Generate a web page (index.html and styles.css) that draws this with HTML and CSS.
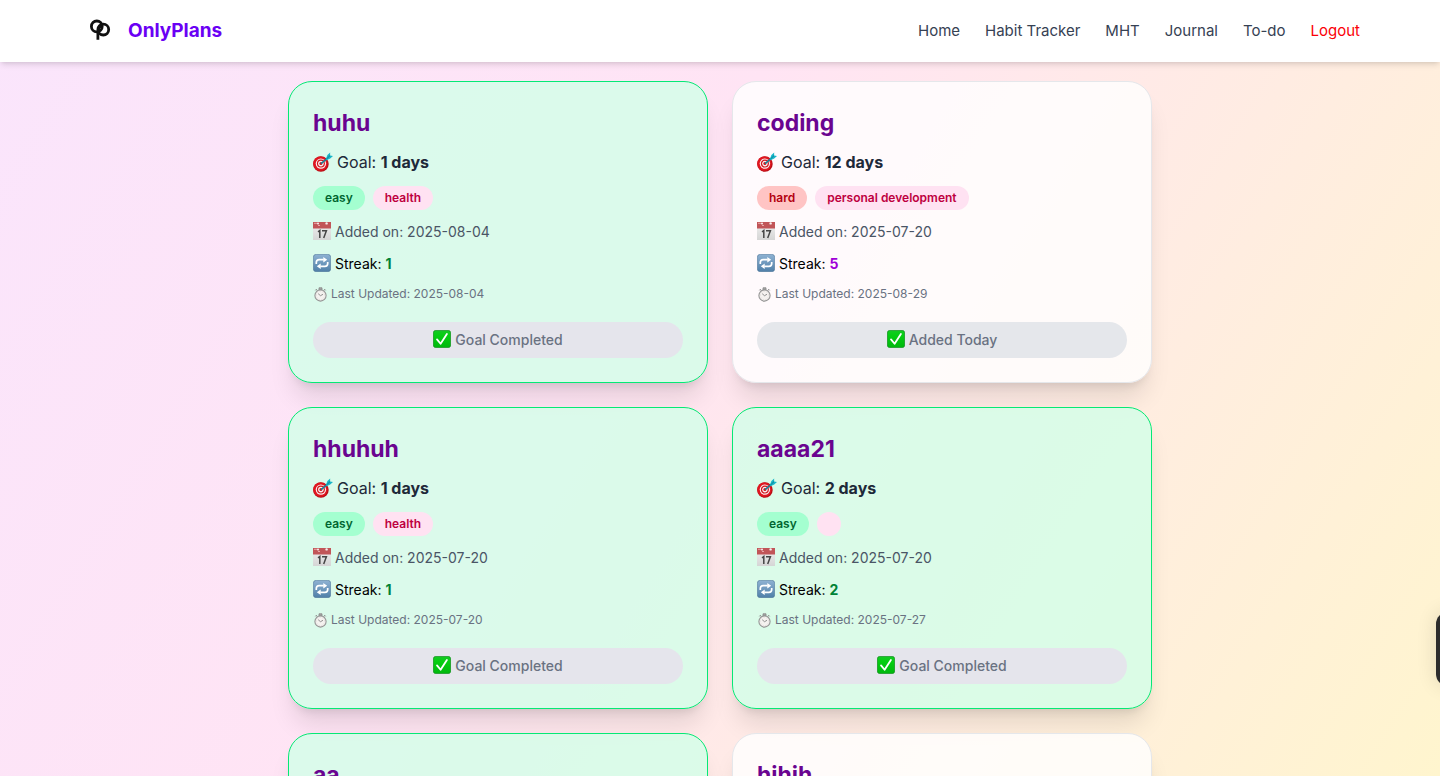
FILE: index.html
```html
<!DOCTYPE html>
<html lang="en">
<head>
<meta charset="utf-8">
<meta name="viewport" content="width=device-width, initial-scale=1">
<title>OnlyPlans</title>
<link rel="stylesheet" href="styles.css">
</head>
<body>
<svg class="sprite" aria-hidden="true">
  <defs>
    <linearGradient id="blue" x1="0" y1="0" x2="0" y2="1"><stop offset="0" stop-color="#8fb2d3"/><stop offset="1" stop-color="#4f7fa8"/></linearGradient>
    <linearGradient id="green" x1="0" y1="0" x2="0" y2="1"><stop offset="0" stop-color="#14c924"/><stop offset=".3" stop-color="#05ce12"/><stop offset="1" stop-color="#00b80d"/></linearGradient>
    <linearGradient id="paper" x1="0" y1="0" x2="0" y2="1"><stop offset="0" stop-color="#efefef"/><stop offset="1" stop-color="#d5d5d5"/></linearGradient>
  </defs>
  <symbol id="target" viewBox="0 0 20 20">
    <circle cx="7.9" cy="12" r="7.8" fill="#b90d15"/>
    <circle cx="7.4" cy="11.6" r="7.2" fill="#e01620"/>
    <circle cx="7.9" cy="11.6" r="5.2" fill="#f8eeee"/>
    <circle cx="7.9" cy="11.6" r="4" fill="#d3131c"/>
    <circle cx="7.9" cy="11.6" r="2.8" fill="#f8eeee"/>
    <circle cx="7.9" cy="11.6" r="1.5" fill="#d3131c"/>
    <path d="M8 11.6 15.5 5.4" stroke="#157f96" stroke-width="1.5"/>
    <path d="M12.8 7.2 14.4 3 17.2.6 17 3.6l3 .3-2.8 2.7-3.7 1.6z" fill="#19b6c9"/>
    <path d="M13.5 7 17.2 3.4" stroke="#0b7489" stroke-width=".8"/>
  </symbol>
  <symbol id="calendar" viewBox="0 0 18 18">
    <path d="M0 1h18v17H0z" fill="url(#paper)"/>
    <path d="M0 0h18v6.5H0z" fill="#c15558"/>
    <path d="M1 1.3h3M5 3.5h2" stroke="#e8a4a4"/>
    <circle cx="5" cy="1.4" r="1" fill="#f8eeee"/><circle cx="13.6" cy="1.4" r="1.2" fill="#f8eeee"/>
    <path d="M5 9.8 6.8 8.5V16M9 8.8h4.4L10.7 16" fill="none" stroke="#454545" stroke-width="1.5"/>
  </symbol>
  <symbol id="repeat" viewBox="0 0 18 18">
    <rect x=".3" y=".3" width="17.4" height="17.4" rx="3" fill="url(#blue)" stroke="#53789a" stroke-width=".6"/>
    <path d="M3.3 10V8.5q0-2.8 2.8-2.8h4.6M14.7 8v1.5q0 2.8-2.8 2.8H7.3" fill="none" stroke="#fff" stroke-width="1.7"/>
    <path d="M10.3 3.1 14.2 5.7l-3.9 2.7zM7.7 9.6 3.8 12.3 7.7 15z" fill="#fff"/>
  </symbol>
  <symbol id="watch" viewBox="0 0 15 15">
    <path d="M6 .8h3v2H6zM2.3 3.3l1-1 1.2 1.2M12.7 3.3l-1-1-1.2 1.2" fill="#aaa" stroke="#858585" stroke-width=".8"/>
    <circle cx="7.5" cy="8.5" r="5.6" fill="#f5f2f0" stroke="#959595" stroke-width="1.1"/>
    <circle cx="7.5" cy="8.5" r="4.1" fill="none" stroke="#d0cac7" stroke-width=".6" stroke-dasharray=".7 1"/>
    <path d="m7.5 8.7-2.3-2M7.5 8.7l2.5-1.4" stroke="#777" stroke-width=".8"/>
  </symbol>
  <symbol id="check" viewBox="0 0 18 18">
    <rect x=".4" y=".4" width="17.2" height="17.2" rx="2.4" fill="url(#green)" stroke="#159421" stroke-width=".8"/>
    <path d="m4 9.4 3.6 4.4L13.9 3.9" fill="none" stroke="#fff" stroke-width="1.8" stroke-linecap="round" stroke-linejoin="round"/>
  </symbol>
</svg>

<div class="app">
  <header class="navbar">
    <a class="brand" href="#">
      <svg class="brand-logo" viewBox="0 0 22 22" aria-hidden="true"><g fill="none" stroke="#111" stroke-width="2.8"><circle cx="7.8" cy="7.4" r="5.4"/><circle cx="14.3" cy="10.6" r="5.4"/><path d="M8.9 20.8v-8Q9 9.5 12 6.5"/></g></svg>
      <span>OnlyPlans</span>
    </a>
    <nav class="nav-links">
      <a href="#">Home</a><a href="#">Habit Tracker</a><a href="#">MHT</a><a href="#">Journal</a><a href="#">To-do</a><a class="logout" href="#">Logout</a>
    </nav>
  </header>

  <main class="habits">
    <article class="card done">
      <h2>huhu</h2>
      <p class="goal"><svg><use href="#target"/></svg><span>Goal: <strong>1 days</strong></span></p>
      <div class="tags"><span class="tag easy">easy</span><span class="tag category">health</span></div>
      <p class="added"><svg><use href="#calendar"/></svg>Added on: 2025-08-04</p>
      <p class="streak"><svg><use href="#repeat"/></svg><span>Streak: <strong>1</strong></span></p>
      <p class="updated"><svg><use href="#watch"/></svg>Last Updated: 2025-08-04</p>
      <button type="button" disabled><svg><use href="#check"/></svg>Goal Completed</button>
    </article>
    <article class="card">
      <h2>coding</h2>
      <p class="goal"><svg><use href="#target"/></svg><span>Goal: <strong>12 days</strong></span></p>
      <div class="tags"><span class="tag hard">hard</span><span class="tag category">personal development</span></div>
      <p class="added"><svg><use href="#calendar"/></svg>Added on: 2025-07-20</p>
      <p class="streak"><svg><use href="#repeat"/></svg><span>Streak: <strong>5</strong></span></p>
      <p class="updated"><svg><use href="#watch"/></svg>Last Updated: 2025-08-29</p>
      <button type="button" disabled><svg><use href="#check"/></svg>Added Today</button>
    </article>
    <article class="card done">
      <h2>hhuhuh</h2>
      <p class="goal"><svg><use href="#target"/></svg><span>Goal: <strong>1 days</strong></span></p>
      <div class="tags"><span class="tag easy">easy</span><span class="tag category">health</span></div>
      <p class="added"><svg><use href="#calendar"/></svg>Added on: 2025-07-20</p>
      <p class="streak"><svg><use href="#repeat"/></svg><span>Streak: <strong>1</strong></span></p>
      <p class="updated"><svg><use href="#watch"/></svg>Last Updated: 2025-07-20</p>
      <button type="button" disabled><svg><use href="#check"/></svg>Goal Completed</button>
    </article>
    <article class="card done">
      <h2>aaaa21</h2>
      <p class="goal"><svg><use href="#target"/></svg><span>Goal: <strong>2 days</strong></span></p>
      <div class="tags"><span class="tag easy">easy</span><span class="tag category"></span></div>
      <p class="added"><svg><use href="#calendar"/></svg>Added on: 2025-07-20</p>
      <p class="streak"><svg><use href="#repeat"/></svg><span>Streak: <strong>2</strong></span></p>
      <p class="updated"><svg><use href="#watch"/></svg>Last Updated: 2025-07-27</p>
      <button type="button" disabled><svg><use href="#check"/></svg>Goal Completed</button>
    </article>
    <article class="card done">
      <h2>aa</h2>
    </article>
    <article class="card">
      <h2>hihih</h2>
    </article>
  </main>
  <button class="side-tab" type="button" aria-label="Open panel"></button>
</div>
</body>
</html>
```
FILE: styles.css
```css
* { box-sizing: border-box; }
body, h2, p { margin: 0; }
body { font-family: Inter, "Liberation Sans", sans-serif; font-size: 16px; line-height: 24px; color: #000; }
a { color: inherit; text-decoration: none; }
.sprite { position: absolute; width: 0; height: 0; }

.app {
  height: 100vh;
  overflow: hidden;
  display: flex;
  flex-direction: column;
  background: linear-gradient(122deg, #fae5fc, #ffe4f4 42%, #fff5ce);
}

.navbar {
  flex: none;
  display: flex;
  align-items: center;
  justify-content: space-between;
  padding: 17px 80px;
  background: #fff;
  box-shadow: 0 4px 6px -1px rgb(0 0 0 / .1), 0 2px 4px -2px rgb(0 0 0 / .1);
}
.brand { display: flex; align-items: center; gap: 17px; padding-left: 9px; font-size: 19px; line-height: 28px; font-weight: 700; color: #6a00f4; }
.brand-logo { width: 22px; height: 22px; margin-bottom: 2px; }
.nav-links { display: flex; gap: 25px; font-size: 15px; color: #364153; }
.nav-links .logout { color: #fb0007; }

.habits {
  flex: 1;
  min-height: 0;
  width: 100%;
  max-width: 896px;
  margin: 0 auto;
  padding: 19px 16px 0;
  display: grid;
  grid-template-columns: 1fr 1fr;
  grid-auto-rows: 302px;
  gap: 24px;
}
.card {
  display: flex;
  flex-direction: column;
  gap: 12px;
  padding: 24px;
  border: 1px solid #e5e7eb;
  border-radius: 24px;
  background: rgb(255 255 255 / .8);
  box-shadow: 0 20px 25px -5px rgb(0 0 0 / .1), 0 8px 10px -6px rgb(0 0 0 / .1);
}
.card.done { border-color: #05e975; background: rgb(210 255 232 / .8); }
.card h2 { padding-top: 2px; font-size: 23px; line-height: 30px; font-weight: 700; color: #6a0490; }
.card p { display: flex; align-items: center; gap: 4px; }
.card svg { flex: none; width: 18px; height: 18px; }
.card .goal { color: #1e2939; }
.card .goal svg { width: 20px; height: 20px; }
.tags { display: flex; gap: 8px; }
.tag { height: 24px; padding: 4px 12px; border-radius: 12px; font-size: 12px; line-height: 16px; font-weight: 600; }
.easy { background: #a4ffd0; color: #016630; }
.hard { background: #ffc4c4; color: #b30010; }
.category { background: #ffe2f2; color: #be003f; }
.card .added, .card .streak { font-size: 14px; line-height: 20px; }
.card .added svg, .card .streak svg, .card button svg { margin-bottom: 2px; }
.card .added { color: #4a5565; }
.card .streak strong { color: #a000d8; }
.card.done .streak strong { color: #008236; }
.card .updated { gap: 3px; font-size: 12px; line-height: 16px; color: #6a7282; }
.card .updated svg { width: 15px; height: 15px; }
.card button {
  display: flex;
  align-items: center;
  justify-content: center;
  gap: 4px;
  width: 100%;
  margin-top: 8px;
  padding: 8px 16px;
  border: 0;
  border-radius: 18px;
  background: #e5e7eb;
  color: #6a7282;
  font-family: inherit;
  font-size: 14px;
  line-height: 20px;
  font-weight: 500;
}
.card.done button { background: #e5e5ec; }

.side-tab {
  position: fixed;
  right: -44px;
  bottom: 90px;
  width: 48px;
  height: 74px;
  padding: 0;
  border: 0;
  border-radius: 12px;
  background: #2c2c2c;
  box-shadow: 0 0 20px rgb(0 0 0 / .12);
}
```
